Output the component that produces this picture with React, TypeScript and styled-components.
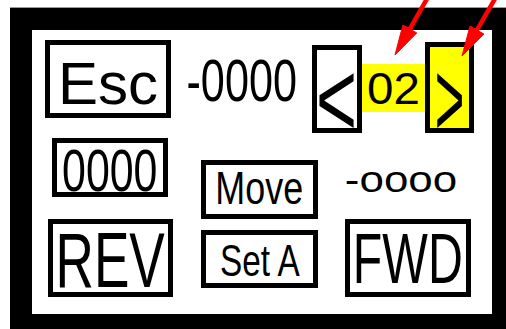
import React, { FC } from 'react';
import styled, { createGlobalStyle } from 'styled-components';

const GlobalStyle = createGlobalStyle`
  html, body {
    margin: 0;
    padding: 0;
    background: #fff;
    font-family: "Liberation Sans", Arial, sans-serif;
  }
`;

const Page = styled.div`
  position: relative;
  width: 506px;
  height: 329px;
  overflow: hidden;
`;

const Frame = styled.div`
  box-sizing: border-box;
  margin: 8px 0 0 10px;
  width: 496px;
  height: 321px;
  background: #000;
  border-style: solid;
  border-color: #000;
  border-width: 22px 14px 15px 22px;
  box-shadow: 0 -1px 0 #9a9a9a;
`;

const Panel = styled.div`
  box-sizing: border-box;
  width: 100%;
  height: 100%;
  background: #fff;
  padding: 10px 0 0 13px;
  display: grid;
  grid-template-columns: 143px 124px 1fr;
  grid-template-rows: 98px 81px auto;
  align-items: start;
  justify-items: start;
`;

/* a bordered key on the screen */
const Key = styled.div<{ $w: number; $h: number; $ml?: number; $mt?: number; $bg?: string }>`
  box-sizing: border-box;
  width: ${p => p.$w}px;
  height: ${p => p.$h}px;
  margin-left: ${p => p.$ml || 0}px;
  margin-top: ${p => p.$mt || 0}px;
  border: 5px solid #000;
  background: ${p => p.$bg || '#fff'};
  display: flex;
  align-items: center;
  justify-content: center;
`;

/* plain value readout, no border */
const Readout = styled.div<{ $w: number; $h: number; $ml?: number; $mt?: number }>`
  width: ${p => p.$w}px;
  height: ${p => p.$h}px;
  margin-left: ${p => p.$ml || 0}px;
  margin-top: ${p => p.$mt || 0}px;
  display: flex;
  align-items: center;
  justify-content: center;
`;

const Label = styled.span<{ $size: number; $sx?: number; $dy?: number }>`
  display: inline-block;
  font-size: ${p => p.$size}px;
  line-height: 1;
  color: #000;
  white-space: nowrap;
  transform: translateY(${p => p.$dy || 0}px) scaleX(${p => p.$sx || 1});
`;

const Nav = styled.div`
  display: flex;
  align-items: center;
  margin-top: 3px;
`;

const Counter = styled.div`
  width: 63px;
  height: 48px;
  background: #ffff00;
  display: flex;
  align-items: center;
  justify-content: center;
`;

const Arrows = styled.svg`
  position: absolute;
  left: 0;
  top: 0;
  pointer-events: none;
`;

const Pointer: FC<{ x1: number; y1: number; x2: number; y2: number }> = ({ x1, y1, x2, y2 }) => {
  const dx = x2 - x1;
  const dy = y2 - y1;
  const len = Math.hypot(dx, dy);
  const ux = dx / len;
  const uy = dy / len;
  const head = 30;
  const half = 8;
  const bx = x2 - ux * head;
  const by = y2 - uy * head;
  const nx = -uy;
  const ny = ux;
  const pts = `${x2},${y2} ${bx + nx * half},${by + ny * half} ${bx - nx * half},${by - ny * half}`;
  return (
    <g fill="#ff0000" stroke="#ff0000">
      <line x1={x1} y1={y1} x2={bx + ux * 4} y2={by + uy * 4} strokeWidth={4.5} />
      <polygon points={pts} strokeWidth={1} />
    </g>
  );
};

const App: FC = () => {
  return (
    <Page>
      <GlobalStyle />
      <Frame>
        <Panel>
          <Key $w={126} $h={78}>
            <Label $size={60} $dy={5}>Esc</Label>
          </Key>
          <Readout $w={107} $h={78}>
            <Label $size={60} $sx={0.72} $dy={1.7}>-0000</Label>
          </Readout>
          <Nav>
            <Key $w={50} $h={88} $mt={2}>
              <Label $size={108} $sx={0.65} $dy={10}>&lt;</Label>
            </Key>
            <Counter>
              <Label $size={44} $sx={1.08} $dy={1}>02</Label>
            </Counter>
            <Key $w={49} $h={91} $bg="#ffff00" $mt={-1}>
              <Label $size={108} $sx={0.47} $dy={11}>&gt;</Label>
            </Key>
          </Nav>

          <Key $w={116} $h={59} $ml={7}>
            <Label $size={60} $sx={0.715} $dy={3}>0000</Label>
          </Key>
          <Key $w={117} $h={59} $ml={13} $mt={22}>
            <Label $size={46} $sx={0.78} $dy={-2.5}>Move</Label>
          </Key>
          <Readout $w={106} $h={59} $ml={36} $mt={12}>
            <Label $size={36} $sx={1.22}>-oooo</Label>
          </Readout>

          <Key $w={125} $h={78} $ml={3}>
            <Label $size={77} $sx={0.69} $dy={2.4}>REV</Label>
          </Key>
          <Key $w={117} $h={58} $ml={13} $mt={11}>
            <Label $size={45} $sx={0.74} $dy={0.5}>Set A</Label>
          </Key>
          <Key $w={126} $h={78} $ml={33}>
            <Label $size={71} $sx={0.68} $dy={0.3}>FWD</Label>
          </Key>
        </Panel>
      </Frame>
      <Arrows width={506} height={329} viewBox="0 0 506 329">
        <Pointer x1={428} y1={-3} x2={395} y2={55} />
        <Pointer x1={496} y1={-3} x2={462} y2={56} />
      </Arrows>
    </Page>
  );
};

export default App;
